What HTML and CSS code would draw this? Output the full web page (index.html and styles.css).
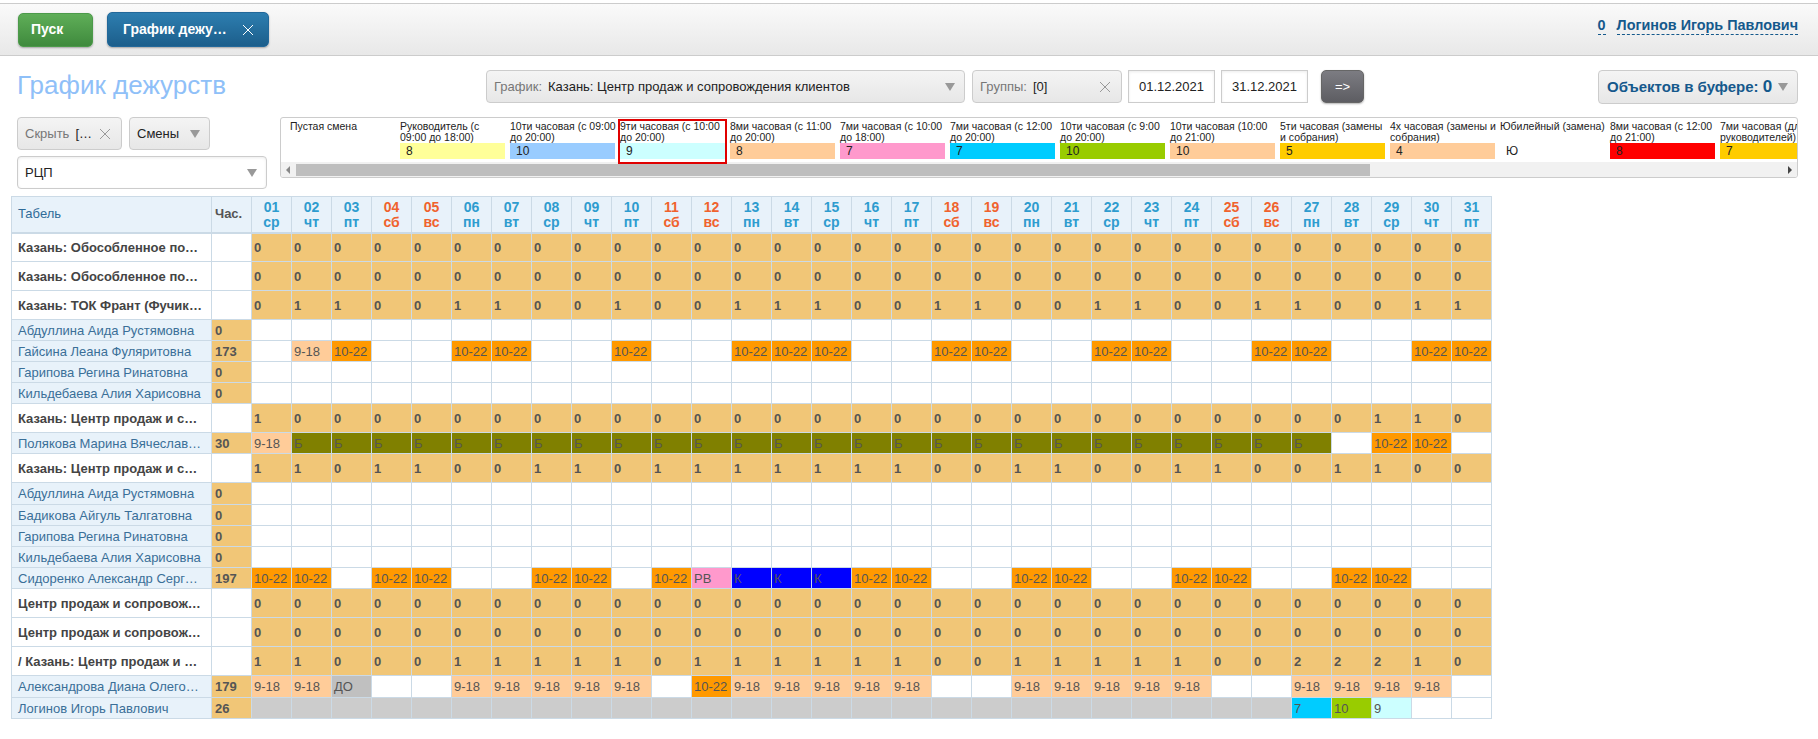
FILE: index.html
```html
<!DOCTYPE html>
<html lang="ru">
  <head>
    <meta charset="UTF-8" />
    <title>График дежурств</title>
    <link rel="stylesheet" href="styles.css">
  </head>
  <body>
    <div class="topbar">
      <button class="btn-start">Пуск</button>
      <button class="btn-tab">
        <span class="btn-tab-text">График дежу…</span>
        <svg class="close-icon" viewBox="0 0 12 12"><path d="M1 1L11 11M11 1L1 11" /></svg>
      </button>
      <div class="user-links">
        <a class="user-link">0</a>
        <a class="user-link">Логинов Игорь Павлович</a>
      </div>
    </div>

    <div class="page">
      <div class="filters">
        <h1 class="title">График дежурств</h1>
        <div class="control control-schedule">
          <span class="control-label">График:</span>
          <span class="control-value">Казань: Центр продаж и сопровождения клиентов</span>
          <span class="arrow"></span>
        </div>
        <div class="control control-groups">
          <span class="control-label">Группы:</span>
          <span class="control-value">[0]</span>
          <svg class="clear-icon" viewBox="0 0 12 12"><path d="M1 1L11 11M11 1L1 11" /></svg>
        </div>
        <div class="date-box">01.12.2021</div>
        <div class="date-box">31.12.2021</div>
        <button class="btn-go">=&gt;</button>
        <div class="control control-buffer">
          <span class="buffer-text">Объектов в буфере: <b>0</b></span>
          <span class="arrow"></span>
        </div>
      </div>

      <div class="options">
        <div class="options-left">
          <div class="options-line">
            <div class="control control-hide">
              <span class="control-label">Скрыть</span>
              <span class="control-value">[…</span>
              <svg class="clear-icon" viewBox="0 0 12 12"><path d="M1 1L11 11M11 1L1 11" /></svg>
            </div>
            <div class="control control-shifts">
              <span class="control-value">Смены</span>
              <span class="arrow"></span>
            </div>
          </div>
          <div class="control control-dept">
            <span class="control-value">РЦП</span>
            <span class="arrow"></span>
          </div>
        </div>

        <div class="legend">
          <div class="legend-items" id="legendItems"></div>
          <div class="legend-scroll">
            <span class="scroll-left"></span>
            <span class="scroll-thumb"></span>
            <span class="scroll-right"></span>
          </div>
        </div>
      </div>

      <table class="timesheet">
        <colgroup>
          <col class="col-name" />
          <col class="col-hours" />
        </colgroup>
        <thead id="tableHead"></thead>
        <tbody id="tableBody"></tbody>
      </table>
    </div>

    <script src="script.js"></script>
  </body>
</html>
```

FILE: styles.css
```css
body {
  font-family: "Liberation Sans", Arial, sans-serif;
  font-size: 13px;
  margin: 0;
  padding: 0;
  background-color: #fff;
  color: #333;
}

.topbar {
  display: flex;
  align-items: center;
  height: 51px;
  margin-top: 3px;
  padding: 0 20px 0 18px;
  border-top: 1px solid #ccc;
  border-bottom: 1px solid #ccc;
  background: linear-gradient(#fafafa, #e8e8e8);
}

.btn-start,
.btn-tab,
.btn-go {
  border-radius: 5px;
  color: #fff;
  font-family: inherit;
  font-size: 14px;
  font-weight: bold;
  box-shadow: 0 1px 2px rgba(0, 0, 0, 0.3);
}

.btn-start {
  width: 75px;
  height: 34px;
  padding: 0 0 2px 12px;
  border: 1px solid #4c9a4a;
  background: linear-gradient(#5fae58, #3f8a3d);
  text-align: left;
}

.btn-tab {
  display: flex;
  align-items: center;
  width: 162px;
  height: 35px;
  margin-left: 14px;
  padding: 0 0 2px 15px;
  border: 1px solid #22689a;
  background: linear-gradient(#2d7eb0, #1c5e8b);
}

.close-icon {
  width: 12px;
  height: 12px;
  margin-left: 15px;
  margin-top: 3px;
}

.close-icon path {
  fill: none;
  stroke: #fff;
  stroke-width: 1;
}

.user-links {
  display: flex;
  gap: 11px;
  margin-left: auto;
  margin-bottom: 7px;
}

.user-link {
  border-bottom: 1px dashed #15598c;
  color: #15598c;
  font-size: 14.4px;
  font-weight: bold;
  line-height: 17px;
}

.page {
  padding: 14px 20px 0 17px;
}

.filters {
  display: flex;
  align-items: flex-start;
  height: 33px;
}

.title {
  width: 469px;
  margin: 0;
  color: #8fc0f8;
  font-size: 26px;
  font-weight: normal;
  line-height: 31px;
}

.control {
  display: flex;
  align-items: center;
  height: 33px;
  padding: 0 7px;
  border: 1px solid #ccc;
  border-radius: 4px;
  background: linear-gradient(#f4f4f4, #e7e7e7);
  box-sizing: border-box;
  font-size: 13px;
}

.control-label {
  margin-right: 6px;
  color: #777;
}

.control-value {
  color: #222;
  white-space: nowrap;
}

.arrow {
  width: 0;
  height: 0;
  margin-left: auto;
  margin-right: 2px;
  border-left: 5px solid transparent;
  border-right: 5px solid transparent;
  border-top: 8px solid #999;
}

.clear-icon {
  width: 12px;
  height: 12px;
  margin-left: auto;
  margin-right: 3px;
}

.clear-icon path {
  fill: none;
  stroke: #999;
  stroke-width: 1;
}

.control-schedule {
  width: 479px;
}

.control-groups {
  width: 150px;
  margin-left: 7px;
}

.date-box {
  width: 87px;
  height: 33px;
  margin-left: 6px;
  border: 1px solid #ccc;
  box-sizing: border-box;
  color: #222;
  line-height: 31px;
  text-align: center;
  box-shadow: inset 0 1px 3px rgba(0, 0, 0, 0.08);
}

.btn-go {
  width: 43px;
  height: 33px;
  margin-left: 13px;
  padding: 0;
  border: 1px solid #666;
  background: linear-gradient(#7c7c82, #5d5d62);
  font-size: 13px;
  font-weight: normal;
}

.control-buffer {
  width: 200px;
  height: 34px;
  margin-left: auto;
  padding: 0 7px 0 8px;
}

.buffer-text {
  color: #15598c;
  font-size: 15px;
  font-weight: bold;
  white-space: nowrap;
}

.buffer-text b {
  font-size: 17px;
}

.options {
  display: flex;
  margin-top: 14px;
}

.options-left {
  display: flex;
  flex-direction: column;
  gap: 6px;
  width: 250px;
  flex-shrink: 0;
}

.options-line {
  display: flex;
  gap: 7px;
}

.control-hide {
  width: 105px;
}

.control-shifts {
  width: 81px;
}

.control-dept {
  background: #fff;
  box-shadow: inset 0 1px 3px rgba(0, 0, 0, 0.08);
}

.legend {
  flex: 1;
  min-width: 0;
  height: 61px;
  margin-left: 13px;
  border: 1px solid #ccc;
  border-radius: 3px;
  box-sizing: border-box;
  overflow: hidden;
}

.legend-items {
  display: flex;
  gap: 5px;
  height: 44px;
  padding: 3px 0 0 9px;
  box-sizing: border-box;
}

.legend-item {
  flex: 0 0 105px;
  color: #222;
}

.legend-item.selected {
  outline: 2px solid #e00000;
}

.legend-title {
  height: 22px;
  margin-right: -1.5px;
  font-size: 10.5px;
  line-height: 11px;
}

.legend-swatch {
  height: 16px;
  padding-left: 6px;
  font-size: 12px;
  line-height: 17px;
}

.legend-scroll {
  display: flex;
  align-items: center;
  height: 15px;
  background-color: #f1f1f1;
}

.scroll-left {
  width: 0;
  height: 0;
  margin-left: 5px;
  border-top: 4px solid transparent;
  border-bottom: 4px solid transparent;
  border-right: 4px solid #888;
}

.scroll-thumb {
  width: 1074px;
  height: 12px;
  margin-left: 6px;
  background-color: #bebebe;
}

.scroll-right {
  width: 0;
  height: 0;
  margin-left: auto;
  margin-right: 5px;
  border-top: 4px solid transparent;
  border-bottom: 4px solid transparent;
  border-left: 4px solid #444;
}

.timesheet {
  table-layout: fixed;
  width: 1481px;
  margin: 7px 0 0 -6px;
  border-collapse: collapse;
}

.col-name {
  width: 200px;
}

.col-hours,
.col-day {
  width: 40px;
}

.timesheet th,
.timesheet td {
  padding: 0;
  border: 1px solid #cbdae6;
  box-sizing: border-box;
  overflow: hidden;
  white-space: nowrap;
  text-overflow: ellipsis;
}

.timesheet th {
  height: 36px;
  border-bottom-width: 2px;
  background-color: #e8f2fa;
  font-size: 13px;
  font-weight: normal;
}

.timesheet .head-name {
  padding: 0 0 2px 6px;
  color: #2f6b98;
  text-align: left;
}

.timesheet .head-hours {
  padding: 0 0 2px 3px;
  color: #555;
  font-weight: bold;
  text-align: left;
}

.timesheet .head-day {
  padding-top: 2px;
  color: #2e9ccf;
  font-size: 14px;
  font-weight: bold;
  line-height: 15px;
}

.timesheet .head-day.weekend {
  color: #f0622d;
}

.row-group td {
  height: 29px;
}

.row-person td {
  height: 21px;
}

.row-person.tall td {
  height: 22px;
}

.timesheet .cell-name {
  padding: 0 8px 0 6px;
}

.row-group .cell-name {
  background-color: #fff;
  color: #444;
  font-weight: bold;
}

.row-person .cell-name {
  background-color: #e8f2fa;
  color: #3a6f98;
}

.timesheet .cell-hours {
  padding-left: 3px;
  background-color: #f1c677;
  color: #555;
  font-weight: bold;
}

.timesheet .row-group .cell-hours {
  background-color: #fff;
}

.timesheet .cell-day {
  padding-left: 2px;
  color: #555;
}

.timesheet .row-group .cell-day {
  background-color: #f1c677;
  font-weight: bold;
}

.s-peach { background-color: #ffcc99; }
.s-orange { background-color: #ff9900; }
.s-olive { background-color: #808000; }
.s-blue { background-color: #0000ff; }
.s-pink { background-color: #ff99cc; }
.s-cyan { background-color: #00ccff; }
.s-green { background-color: #99cc00; }
.s-aqua { background-color: #ccffff; }
.s-yellow { background-color: #ffff99; }
.s-sky { background-color: #99ccff; }
.s-red { background-color: #ff0000; }
.s-gold { background-color: #ffcc00; }
.s-silver { background-color: #c0c0c0; }
.s-grey { background-color: #cccccc; }
```

FILE: script.js
```js
const legend = [
  { title: "Пустая смена", value: "", color: "" },
  { title: "Руководитель (с 09:00 до 18:00)", value: "8", color: "s-yellow" },
  { title: "10ти часовая (с 09:00 до 20:00)", value: "10", color: "s-sky" },
  { title: "9ти часовая (с 10:00 до 20:00)", value: "9", color: "s-aqua", selected: true },
  { title: "8ми часовая (с 11:00 до 20:00)", value: "8", color: "s-peach" },
  { title: "7ми часовая (с 10:00 до 18:00)", value: "7", color: "s-pink" },
  { title: "7ми часовая (с 12:00 до 20:00)", value: "7", color: "s-cyan" },
  { title: "10ти часовая (с 9:00 до 20:00)", value: "10", color: "s-green" },
  { title: "10ти часовая (10:00 до 21:00)", value: "10", color: "s-peach" },
  { title: "5ти часовая (замены и собрания)", value: "5", color: "s-gold" },
  { title: "4х часовая (замены и собрания)", value: "4", color: "s-peach" },
  { title: "Юбилейный (замена)", value: "Ю", color: "" },
  { title: "8ми часовая (с 12:00 до 21:00)", value: "8", color: "s-red" },
  { title: "7ми часовая (для руководителей)", value: "7", color: "s-gold" },
];

const weekdays = ["ср", "чт", "пт", "сб", "вс", "пн", "вт"];
const weekend = [4, 5, 11, 12, 18, 19, 25, 26];

const zeros = "0".repeat(31);

// shift codes per day: . empty, a 9-18, b 10-22, o Б, r РВ, k К, d ДО, g grey, 7/T/9 plan values
const shifts = {
  a: { text: "9-18", color: "s-peach" },
  b: { text: "10-22", color: "s-orange" },
  o: { text: "Б", color: "s-olive" },
  r: { text: "РВ", color: "s-pink" },
  k: { text: "К", color: "s-blue" },
  d: { text: "ДО", color: "s-silver" },
  g: { text: "", color: "s-grey" },
  7: { text: "7", color: "s-cyan" },
  T: { text: "10", color: "s-green" },
  9: { text: "9", color: "s-aqua" },
};

const rows = [
  { name: "Казань: Обособленное подразделение 1", totals: zeros },
  { name: "Казань: Обособленное подразделение 2", totals: zeros },
  { name: "Казань: ТОК Франт (Фучика, 90)", totals: "0110011001001110011001100110011" },
  { name: "Абдуллина Аида Рустямовна", hours: "0", days: "" },
  { name: "Гайсина Леана Фуляритовна", hours: "173", days: ".ab..bb..b..bbb..bb..bb..bb..bb" },
  { name: "Гарипова Регина Ринатовна", hours: "0", days: "" },
  { name: "Кильдебаева Алия Харисовна", hours: "0", days: "" },
  { name: "Казань: Центр продаж и сопровождения", totals: "1000000000000000000000000000110" },
  { name: "Полякова Марина Вячеславовна", hours: "30", days: "a" + "o".repeat(26) + ".bb." },
  { name: "Казань: Центр продаж и сопровождения", totals: "1101100110111111100110011001100" },
  { name: "Абдуллина Аида Рустямовна", hours: "0", days: "", tall: true },
  { name: "Бадикова Айгуль Талгатовна", hours: "0", days: "" },
  { name: "Гарипова Регина Ринатовна", hours: "0", days: "" },
  { name: "Кильдебаева Алия Харисовна", hours: "0", days: "" },
  { name: "Сидоренко Александр Сергеевич", hours: "197", days: "bb.bb..bb.brkkkbb..bb..bb..bb.." },
  { name: "Центр продаж и сопровождения клиентов", totals: zeros },
  { name: "Центр продаж и сопровождения клиентов", totals: zeros },
  { name: "/ Казань: Центр продаж и  сопровождения", totals: "1100011111011111100111110022210" },
  { name: "Александрова Диана Олеговна Сергеевна", hours: "179", days: "aad..aaaaa.baaaaa..aaaaa..aaaa.", tall: true },
  { name: "Логинов Игорь Павлович", hours: "26", days: "g".repeat(26) + "7T9.." },
];

function renderLegend() {
  document.getElementById("legendItems").innerHTML = legend
    .map(
      (item) => `
        <div class="legend-item ${item.selected ? "selected" : ""}">
          <div class="legend-title">${item.title}</div>
          <div class="legend-swatch ${item.color}">${item.value}</div>
        </div>`
    )
    .join("");
}

function renderHead() {
  let cells = '<th class="head-name">Табель</th><th class="head-hours">Час.</th>';
  let cols = "";
  for (let day = 1; day <= 31; day++) {
    const label = String(day).padStart(2, "0");
    const cls = weekend.includes(day) ? "head-day weekend" : "head-day";
    cells += `<th class="${cls}">${label}<br />${weekdays[(day - 1) % 7]}</th>`;
    cols += '<col class="col-day" />';
  }
  document.querySelector(".timesheet colgroup").insertAdjacentHTML("beforeend", cols);
  document.getElementById("tableHead").innerHTML = `<tr>${cells}</tr>`;
}

function renderRow(row) {
  let cells = `<td class="cell-name">${row.name}</td><td class="cell-hours">${row.hours || ""}</td>`;
  for (let i = 0; i < 31; i++) {
    if (row.totals) {
      cells += `<td class="cell-day">${row.totals[i]}</td>`;
    } else {
      const shift = shifts[row.days[i]];
      cells += shift
        ? `<td class="cell-day ${shift.color}">${shift.text}</td>`
        : '<td class="cell-day"></td>';
    }
  }
  const cls = row.totals ? "row-group" : `row-person ${row.tall ? "tall" : ""}`;
  return `<tr class="${cls}">${cells}</tr>`;
}

renderLegend();
renderHead();
document.getElementById("tableBody").innerHTML = rows.map(renderRow).join("");
```
